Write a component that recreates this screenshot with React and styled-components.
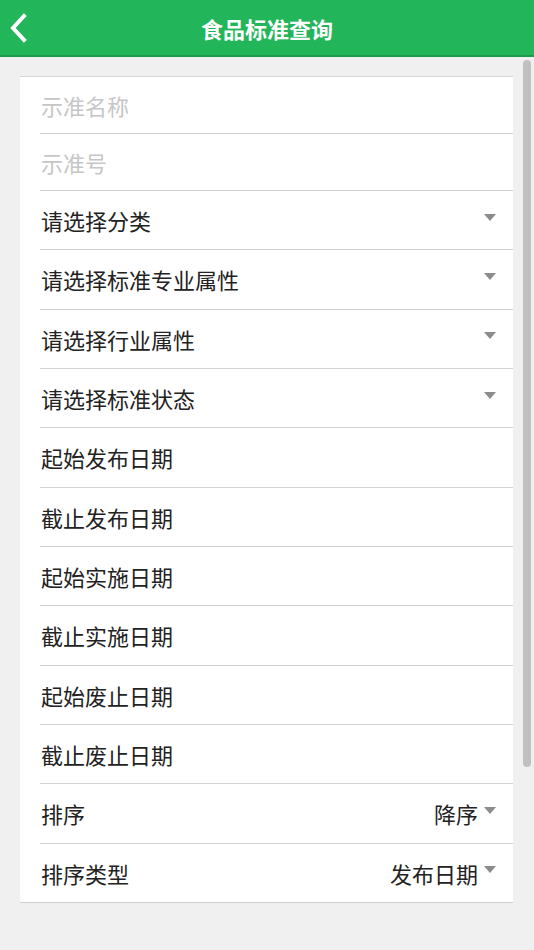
import React from "react";
import styled, { createGlobalStyle } from "styled-components";

const GlobalStyle = createGlobalStyle`
  html, body {
    margin: 0;
    padding: 0;
    background: #f0f0f0;
    font-family: "Noto Sans CJK SC", "Noto Sans", sans-serif;
  }
`;

const Page = styled.div`
  position: relative;
  width: 534px;
  min-height: 950px;
  background: #f0f0f0;
  overflow: hidden;
`;

const Header = styled.div`
  height: 55px;
  background: #22b55a;
  border-bottom: 2px solid #1d9a4c;
  display: flex;
  align-items: center;
  justify-content: center;
  position: relative;
`;

const BackButton = styled.div`
  position: absolute;
  left: 8px;
  top: 12px;
  width: 24px;
  height: 32px;
  display: flex;
  align-items: center;
`;

const Title = styled.h1`
  margin: 0;
  color: #fff;
  font-size: 22px;
  font-weight: 700;
`;

const Card = styled.div`
  margin: 19px 21px 0 20px;
  background: #fff;
  border-top: 1px solid #d6d6d6;
  border-bottom: 1px solid #d0d0d0;
`;

const Row = styled.div`
  height: ${(p) => (p.$input ? "56px" : "58.33px")};
  margin-left: 20px;
  padding-right: 17px;
  display: flex;
  align-items: center;
  justify-content: space-between;
  border-bottom: ${(p) => (p.$last ? "none" : "1px solid #d2d2d2")};
  font-size: 22px;
  color: ${(p) => (p.$placeholder ? "#c6c6c6" : "#222")};
`;

const Label = styled.span`
  line-height: 1;
  margin-left: 1px;
`;

const Right = styled.div`
  display: flex;
  align-items: center;
  gap: 6px;
  color: #222;
`;

const Caret = styled.span`
  width: 0;
  height: 0;
  border-left: 6.5px solid transparent;
  border-right: 6.5px solid transparent;
  border-top: 7px solid #8c8c8c;
  margin-bottom: 6px;
`;

const Scrollbar = styled.div`
  position: absolute;
  left: 523px;
  top: 60px;
  width: 8px;
  height: 707px;
  border-radius: 4px;
  background: #c0c0c0;
`;

const inputs = ["示准名称", "示准号"];
const selects = ["请选择分类", "请选择标准专业属性", "请选择行业属性", "请选择标准状态"];
const dates = [
  "起始发布日期",
  "截止发布日期",
  "起始实施日期",
  "截止实施日期",
  "起始废止日期",
  "截止废止日期",
];
const sorts = [
  { label: "排序", value: "降序" },
  { label: "排序类型", value: "发布日期" },
];

export default function App() {
  return (
    <Page>
      <GlobalStyle />
      <Header>
        <BackButton>
          <svg width="22" height="30" viewBox="0 0 22 30">
            <path
              d="M16 3 L5 15 L16 27"
              fill="none"
              stroke="#fff"
              strokeWidth="4"
              strokeLinecap="square"
            />
          </svg>
        </BackButton>
        <Title>食品标准查询</Title>
      </Header>
      <Card>
        {inputs.map((t) => (
          <Row key={t} $input $placeholder>
            <Label>{t}</Label>
          </Row>
        ))}
        {selects.map((t) => (
          <Row key={t}>
            <Label>{t}</Label>
            <Caret />
          </Row>
        ))}
        {dates.map((t) => (
          <Row key={t}>
            <Label>{t}</Label>
          </Row>
        ))}
        {sorts.map((s, i) => (
          <Row key={s.label} $last={i === sorts.length - 1}>
            <Label>{s.label}</Label>
            <Right>
              <span>{s.value}</span>
              <Caret />
            </Right>
          </Row>
        ))}
      </Card>
      <Scrollbar />
    </Page>
  );
}
